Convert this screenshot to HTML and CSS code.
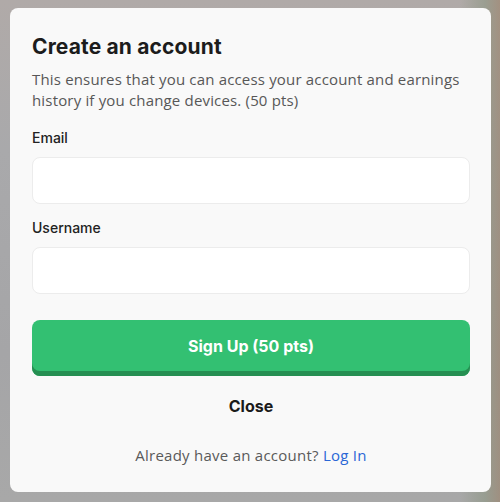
FILE: index.html
```html
<!DOCTYPE html>
<html lang="en">
<head>
<meta charset="utf-8">
<title>Create an account</title>
<link rel="stylesheet" href="styles.css">
</head>
<body>
<div class="backdrop">
  <div class="modal">
    <h1 class="title">Create an account</h1>
    <p class="desc">This ensures that you can access your account and earnings history if you change devices. (50 pts)</p>
    <label class="label" for="email">Email</label>
    <input class="input" id="email" type="text">
    <label class="label label-user" for="username">Username</label>
    <input class="input" id="username" type="text">
    <button class="signup">Sign Up (50 pts)</button>
    <button class="close">Close</button>
    <p class="login">Already have an account? <a class="login-link" href="#">Log In</a></p>
  </div>
</div>
</body>
</html>
```

FILE: styles.css
```css
html, body {
  margin: 0;
  padding: 0;
}
body {
  width: 500px;
  height: 502px;
  overflow: hidden;
  font-family: "Open Sans", "Lato", sans-serif;
}
.backdrop {
  width: 500px;
  height: 502px;
  box-sizing: border-box;
  padding: 8px 9px 10px 10px;
  background:
    linear-gradient(90deg, rgba(160,160,165,0) 0%, rgba(160,160,165,0) 92%, rgba(140,150,130,0.6) 97%, rgba(150,120,90,0.5) 100%),
    linear-gradient(180deg, #b0aaa8 0%, #a9a9ab 30%, #a5a5a7 70%, #a8a8a8 100%);
}
.modal {
  background: #f9f9f9;
  border-radius: 8px;
  height: 484px;
  box-sizing: border-box;
  padding: 27px 21px 0 22px;
  display: flex;
  flex-direction: column;
}
.title {
  margin: 0;
  font-family: "Inter", sans-serif;
  font-weight: 700;
  font-size: 21px;
  line-height: 24px;
  color: #1c1c1c;
  letter-spacing: 0.15px;
}
.desc {
  margin: 10px 0 0;
  font-size: 15px;
  line-height: 21px;
  color: #575757;
  letter-spacing: 0.17px;
}
.label {
  margin-top: 17px;
  font-family: "Inter", sans-serif;
  font-size: 14px;
  font-weight: 500;
  line-height: 20px;
  color: #222;
}
.label-user {
  margin-top: 14px;
}
.input {
  margin-top: 9px;
  height: 47px;
  box-sizing: border-box;
  border: 1px solid #ececec;
  border-radius: 8px;
  background: #fff;
  outline: none;
}
.signup {
  margin-top: 26px;
  height: 56px;
  box-sizing: border-box;
  padding-bottom: 5px;
  border: none;
  border-radius: 8px;
  background: #33c072;
  box-shadow: inset 0 -5px 0 #268f52;
  color: #fff;
  font-family: "Inter", sans-serif;
  font-weight: 700;
  font-size: 16px;
}
.close {
  margin-top: 20px;
  height: 20px;
  padding: 0;
  border: none;
  background: transparent;
  font-family: "Inter", sans-serif;
  font-weight: 700;
  font-size: 16px;
  color: #1a1a1a;
  line-height: 20px;
}
.login {
  margin: 29px 0 0;
  text-align: center;
  font-size: 15px;
  line-height: 20px;
  color: #5a5a5a;
  letter-spacing: 0.25px;
}
.login-link {
  color: #2a67d6;
  text-decoration: none;
}
```
